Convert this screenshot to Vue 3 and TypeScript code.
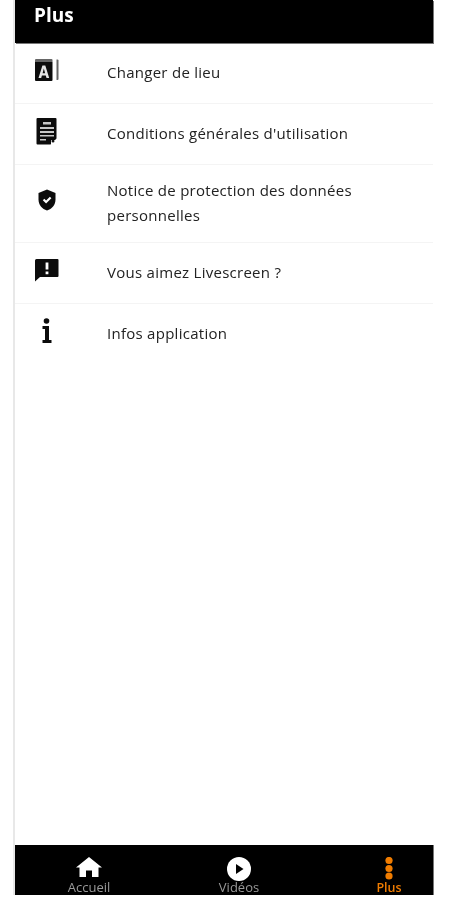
<script setup lang="ts">
interface Item { id: string; lines: string[]; tall?: boolean }
const items: Item[] = [
  { id: 'lang', lines: ['Changer de lieu'] },
  { id: 'doc', lines: ['Conditions générales d\'utilisation'] },
  { id: 'shield', lines: ['Notice de protection des données', 'personnelles'], tall: true },
  { id: 'chat', lines: ['Vous aimez Livescreen ?'] },
  { id: 'info', lines: ['Infos application'] },
]
</script>

<template>
  <div class="frame">
    <header class="top">Plus</header>
    <main class="list">
      <div v-for="item in items" :key="item.id" class="row" :class="{ tall: item.tall }">
        <div class="ico" :class="'ico-' + item.id">
          <svg v-if="item.id === 'lang'" width="24" height="24" viewBox="0 0 24 24">
            <path d="M0 4h17.500v18a1 1 0 0 1-1 1H1a1 1 0 0 1-1-1z" fill="#0c0c0c" />
            <path d="M1 1h15.500a1 1 0 0 1 1 1v2H0V2a1 1 0 0 1 1-1z" fill="#666" />
            <path d="M21.500 1.500h1a1 1 0 0 1 1 1V21a1 1 0 0 1-1 1h-1z" fill="#666" />
            <path d="M3.500 20 7.400 7.500h2.900L14.200 20h-2.700l-.7-2.600H6.900L6.200 20zM7.600 15.200h2.500L8.850 10.500z" fill="#e4e4e4" />
          </svg>
          <svg v-else-if="item.id === 'doc'" width="24" height="28" viewBox="0 0 24 28">
            <path d="M2.500 1h18a1 1 0 0 1 1 1v19.500L15.500 27.500h-13a1 1 0 0 1-1-1V2a1 1 0 0 1 1-1z" fill="#0c0c0c" />
            <path d="M8 5h8v2.500H8zM5 10h14v2H5zM5 14h14v2H5zM5 18h14v1.600H5zM5 22h6v1.500H5z" fill="#c8c8c8" />
            <path d="M16 23h6l-6 5z" fill="#fff" />
            <circle cx="18" cy="24" r="1.500" fill="#111" />
          </svg>
          <svg v-else-if="item.id === 'shield'" width="24" height="24" viewBox="0 0 24 24">
            <path d="M12 1.500 20.500 5v6.500c0 5.300-3.600 9.700-8.500 11-4.900-1.300-8.500-5.700-8.500-11V5z" fill="#0c0c0c" />
            <path d="m7.800 12.300 1.500-1.500 1.800 1.800 3.800-3.800 1.500 1.500-5.300 5.300z" fill="#fff" />
          </svg>
          <svg v-else-if="item.id === 'chat'" width="24" height="24" viewBox="0 0 24 24">
            <path d="M1.500 1h21a1 1 0 0 1 1 1v16a1 1 0 0 1-1 1H5l-5 4.500V2.500A1.500 1.500 0 0 1 1.500 1z" fill="#0c0c0c" />
            <path d="M10.600 4.500h2.800v7h-2.800zM10.600 13.500h2.800v2.800h-2.800z" fill="#fff" />
          </svg>
          <svg v-else width="24" height="26" viewBox="0 0 24 26">
            <circle cx="11.500" cy="3" r="2.800" fill="#0c0c0c" />
            <path d="M7.500 8h6.500v14h2.500v3h-9v-3H10V11H7.500z" fill="#0c0c0c" />
          </svg>
        </div>
        <div class="label">
          <span v-for="l in item.lines" :key="l" class="line">{{ l }}</span>
        </div>
      </div>
    </main>
    <nav class="nav">
      <div class="tab">
        <svg width="26" height="24" viewBox="0 0 26 24"><path d="M13 0 26 10.500h-3.500v9.500H16v-6.500h-6V20H3.500v-9.500H0z" fill="#fff" /></svg>
        <span>Accueil</span>
      </div>
      <div class="tab">
        <svg width="26" height="24" viewBox="0 0 26 24"><circle cx="13" cy="12" r="12" fill="#fff" /><path d="M10 7v10l7.500-5z" fill="#000" /></svg>
        <span>Vidéos</span>
      </div>
      <div class="tab active">
        <svg width="26" height="24" viewBox="0 0 26 24"><g fill="#f07c00"><circle cx="13" cy="3.500" r="3.600" /><circle cx="13" cy="11.500" r="3.600" /><circle cx="13" cy="19" r="3.600" /></g></svg>
        <span>Plus</span>
      </div>
    </nav>
  </div>
</template>

<style>
html, body { background: #fff; }
</style>

<style scoped>
.frame {
  margin-left: 15px;
  width: 418px;
  height: 895px;
  display: flex;
  flex-direction: column;
  box-shadow: -2px 0 0 #e8e8e8;
  font-family: "Open Sans", "Noto Sans", sans-serif;
  filter: blur(0.5px);
}
.top {
  height: 43px;
  flex: none;
  box-sizing: border-box;
  background: #000;
  color: #fff;
  font-size: 19px;
  font-weight: 700;
  padding: 3px 0 0 19px;
  line-height: 24px;
  box-shadow: 1px 1px 0 #777;
}
.list { flex: 1; }
.row {
  height: 61px;
  box-sizing: border-box;
  border-bottom: 1px solid #f4f4f4;
  display: flex;
  align-items: center;
}
.row:last-child { border-bottom: none; }
.row.tall { height: 78px; }
.ico {
  width: 92px;
  flex: none;
  padding-left: 20px;
  box-sizing: border-box;
  height: 28px;
  margin-top: -7px;
  display: flex;
  align-items: center;
}
.label {
  font-size: 15px;
  line-height: 25px;
  color: #222;
  letter-spacing: 0.27px;
  margin-top: -2px;
}
.line { display: block; }
.nav {
  height: 50px;
  flex: none;
  background: #000;
  display: flex;
  justify-content: space-between;
  padding-left: 30px;
  box-sizing: border-box;
  box-shadow: 1px 0 0 #777;
}
.tab {
  width: 88px;
  display: flex;
  flex-direction: column;
  align-items: center;
  padding-top: 12px;
  box-sizing: border-box;
  color: #999;
  font-size: 13px;
  line-height: 13px;
  height: 50px;
}
.tab svg { height: 24px; flex: none; }
.tab.active { color: #f07c00; font-weight: 600; font-size: 12.500px; }
</style>
